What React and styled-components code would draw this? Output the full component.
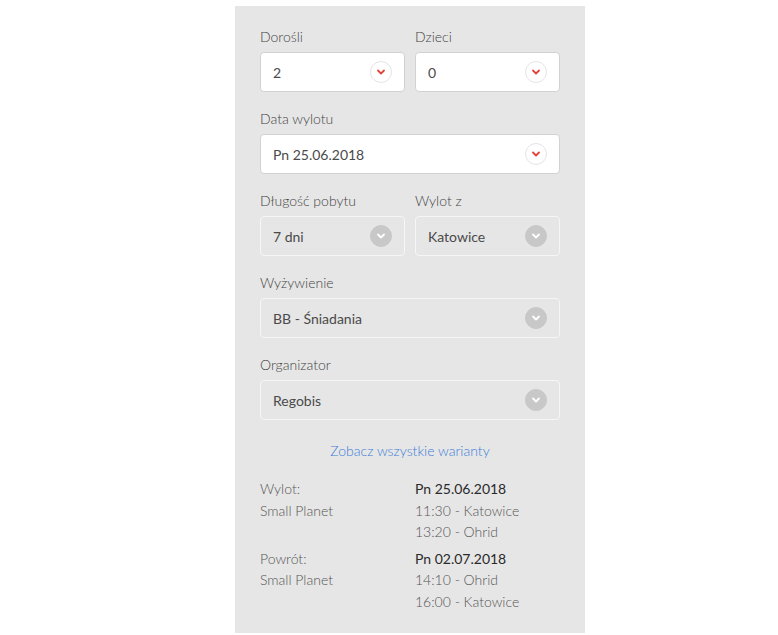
import React from "react";
import styled, { createGlobalStyle } from "styled-components";

const GlobalStyle = createGlobalStyle`
  body {
    margin: 0;
    background: #ffffff;
    font-family: "Lato", "Open Sans", sans-serif;
  }
`;

const Panel = styled.div`
  width: 350px;
  box-sizing: border-box;
  margin: 6px 0 0 235px;
  padding: 20px 25px 21px;
  background-color: #e6e6e6;
`;

const Row = styled.div`
  display: grid;
  grid-template-columns: 1fr 1fr;
  column-gap: 10px;
  margin-bottom: 16px;
`;

const Field = styled.div`
  display: flex;
  flex-direction: column;
  margin-bottom: ${(p) => (p.$last ? "0" : "16px")};
`;

const Label = styled.div`
  height: 22px;
  line-height: 22px;
  margin-bottom: 4px;
  font-size: 14px;
  font-weight: 300;
  color: #444;
`;

const Select = styled.div`
  height: 40px;
  box-sizing: border-box;
  display: flex;
  align-items: center;
  justify-content: space-between;
  padding: 0 12px;
  border-radius: 4px;
  border: 1px solid ${(p) => (p.$disabled ? "#f6f6f6" : "#d2d2d2")};
  background-color: ${(p) => (p.$disabled ? "transparent" : "#ffffff")};
  font-size: 14px;
  color: #4a4a4a;
`;

const Toggle = styled.span`
  width: 22px;
  height: 22px;
  box-sizing: border-box;
  border-radius: 50%;
  display: flex;
  align-items: center;
  justify-content: center;
  border: 1px solid ${(p) => (p.$disabled ? "#c8c8c8" : "#e4e4e4")};
  background-color: ${(p) => (p.$disabled ? "#c8c8c8" : "#ffffff")};
`;

const Link = styled.a`
  display: block;
  margin: 20px 0 16px;
  line-height: 22px;
  text-align: center;
  font-size: 14px;
  font-weight: 300;
  color: #3b7dd8;
  text-decoration: none;
`;

const Leg = styled.div`
  display: grid;
  grid-template-columns: 155px 1fr;
  margin-bottom: ${(p) => (p.$last ? "0" : "5px")};
  font-size: 14px;
  line-height: 21.5px;
  font-weight: 300;
  color: #555;
`;

const Date = styled.div`
  font-weight: 400;
  color: #2a2a2a;
`;

function Chevron({ color }) {
  return (
    <svg width="10" height="8" viewBox="0 0 10 8">
      <path d="M2 2.5 L5 5.5 L8 2.5" fill="none" stroke={color} strokeWidth="1.8" strokeLinecap="round" strokeLinejoin="round" />
    </svg>
  );
}

function Dropdown({ value, disabled }) {
  return (
    <Select $disabled={disabled}>
      <span>{value}</span>
      <Toggle $disabled={disabled}>
        <Chevron color={disabled ? "#ffffff" : "#e2443a"} />
      </Toggle>
    </Select>
  );
}

export default function App() {
  return (
    <>
      <GlobalStyle />
      <Panel>
        <Row>
          <div>
            <Label>Dorośli</Label>
            <Dropdown value="2" />
          </div>
          <div>
            <Label>Dzieci</Label>
            <Dropdown value="0" />
          </div>
        </Row>
        <Field>
          <Label>Data wylotu</Label>
          <Dropdown value="Pn 25.06.2018" />
        </Field>
        <Row>
          <div>
            <Label>Długość pobytu</Label>
            <Dropdown value="7 dni" disabled />
          </div>
          <div>
            <Label>Wylot z</Label>
            <Dropdown value="Katowice" disabled />
          </div>
        </Row>
        <Field>
          <Label>Wyżywienie</Label>
          <Dropdown value="BB - Śniadania" disabled />
        </Field>
        <Field $last>
          <Label>Organizator</Label>
          <Dropdown value="Regobis" disabled />
        </Field>
        <Link href="#">Zobacz wszystkie warianty</Link>
        <Leg>
          <div>
            Wylot:
            <br />
            Small Planet
          </div>
          <div>
            <Date>Pn 25.06.2018</Date>
            11:30 - Katowice
            <br />
            13:20 - Ohrid
          </div>
        </Leg>
        <Leg $last>
          <div>
            Powrót:
            <br />
            Small Planet
          </div>
          <div>
            <Date>Pn 02.07.2018</Date>
            14:10 - Ohrid
            <br />
            16:00 - Katowice
          </div>
        </Leg>
      </Panel>
    </>
  );
}
